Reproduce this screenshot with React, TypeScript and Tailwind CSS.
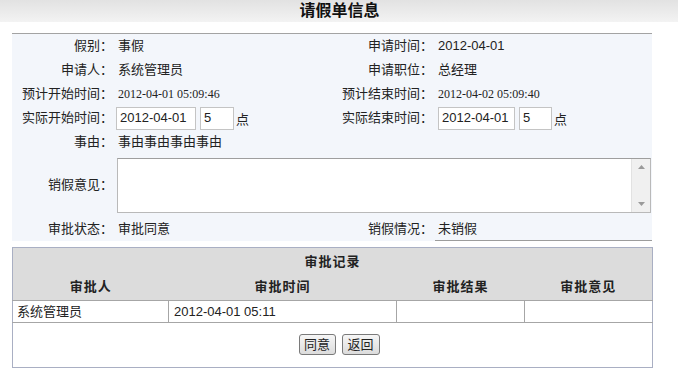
import React from "react";

const F = "font-['Liberation_Sans','Noto_Sans_CJK_SC',sans-serif]";

function Label({ children }: { children: React.ReactNode }) {
  return <div className="flex items-center justify-end pr-[5px] whitespace-nowrap">{children}</div>;
}

function DateInput({ date, small }: { date: string; small?: boolean }) {
  return (
    <div className="flex items-center">
      <div className={`${small ? "w-[77px]" : "w-[80px]"} h-[23px] border border-[#c4c4c4] bg-white flex items-center pl-[3px] text-[13px]`}>{date}</div>
      <div className={`ml-[4px] ${small ? "w-[33px]" : "w-[34px]"} h-[23px] border border-[#c4c4c4] bg-white flex items-center pl-[3px] text-[13px]`}>5</div>
      <span className="ml-[2px] mt-[4px] text-[13px]">点</span>
    </div>
  );
}

export default function App() {
  const serifDate = "font-['Liberation_Serif',serif] text-[12px]";
  return (
    <div className={`w-[678px] h-[373px] bg-white text-[13px] text-[#222] ${F}`}>
      <div className="h-[22px] bg-gradient-to-b from-[#e2e2e2] to-[#f3f3f3] flex items-center justify-center text-[16px] font-bold text-[#111] pl-[1px]">
        请假单信息
      </div>
      <div className="h-[11px]" />
      <div className="ml-[12px] w-[640px] border-t border-[#a3a3a3] bg-[#f3f6fb] grid grid-cols-[106px_212px_108px_214px] grid-rows-[23px_25px_23px_26px_22px_64px_24px]">
        <Label>假别：</Label>
        <div className="flex items-center">事假</div>
        <Label>申请时间：</Label>
        <div className="flex items-center">2012-04-01</div>

        <Label>申请人：</Label>
        <div className="flex items-center">系统管理员</div>
        <Label>申请职位：</Label>
        <div className="flex items-center">总经理</div>

        <Label>预计开始时间：</Label>
        <div className={`flex items-center ${serifDate}`}>2012-04-01 05:09:46</div>
        <Label>预计结束时间：</Label>
        <div className={`flex items-center ${serifDate}`}>2012-04-02 05:09:40</div>

        <Label>实际开始时间：</Label>
        <div className="flex items-center -ml-[2px]"><DateInput date="2012-04-01" /></div>
        <Label>实际结束时间：</Label>
        <div className="flex items-center"><DateInput date="2012-04-01" small /></div>

        <Label>事由：</Label>
        <div className="col-span-3 flex items-center">事由事由事由事由</div>

        <Label>销假意见：</Label>
        <div className="col-span-3 flex items-center -ml-[1px]">
          <div className="w-[534px] h-[55px] border border-[#b9b9b9] border-t-[#9e9e9e] bg-white flex justify-end">
            <div className="w-[19px] h-full bg-[#f0f0f0] border-l border-[#e2e2e2] flex flex-col items-center justify-between py-[6px]">
              <svg width="7" height="4" viewBox="0 0 7 4"><path d="M0 4 L3.5 0 L7 4 Z" fill="#9a9a9a" /></svg>
              <svg width="7" height="4" viewBox="0 0 7 4"><path d="M0 0 L3.5 4 L7 0 Z" fill="#9a9a9a" /></svg>
            </div>
          </div>
        </div>

        <Label>审批状态：</Label>
        <div className="flex items-center">审批同意</div>
        <Label>销假情况：</Label>
        <div className="flex items-center border-b border-[#9c9c9c] -ml-[3px] pl-[3px]">未销假</div>
      </div>
      <div className="h-[6px]" />
      <table className="ml-[12px] w-[640px] border-collapse table-fixed border border-[#a9afc3]">
        <colgroup>
          <col className="w-[156px]" />
          <col className="w-[228px]" />
          <col className="w-[128px]" />
          <col className="w-[128px]" />
        </colgroup>
        <tbody>
          <tr className="h-[26px] bg-[#dcdcdc]">
            <td colSpan={4} className="text-center font-bold tracking-[1px] pt-[2px]">审批记录</td>
          </tr>
          <tr className="h-[27px] bg-[#dcdcdc] border-b border-[#a6a6a6]">
            <td className="text-center font-bold tracking-[1px]">审批人</td>
            <td className="text-center font-bold tracking-[1px]">审批时间</td>
            <td className="text-center font-bold tracking-[1px]">审批结果</td>
            <td className="text-center font-bold tracking-[1px]">审批意见</td>
          </tr>
          <tr className="h-[22px] bg-white border-b border-[#a6a6a6]">
            <td className="pl-[4px] border-r border-[#a6a6a6]">系统管理员</td>
            <td className="pl-[5px] border-r border-[#a6a6a6]">2012-04-01 05:11</td>
            <td className="border-r border-[#a6a6a6]"></td>
            <td></td>
          </tr>
          <tr className="h-[45px] bg-white">
            <td colSpan={4}>
              <div className="flex justify-center gap-[6px] pl-[13px] pb-[2px]">
                <button className="w-[37px] h-[21px] border border-[#7a7a7a] rounded-[3px] bg-gradient-to-b from-[#f6f6f6] to-[#dcdcdc] text-[13px] leading-none">同意</button>
                <button className="w-[38px] h-[21px] border border-[#7a7a7a] rounded-[3px] bg-gradient-to-b from-[#f6f6f6] to-[#dcdcdc] text-[13px] leading-none">返回</button>
              </div>
            </td>
          </tr>
        </tbody>
      </table>
    </div>
  );
}
